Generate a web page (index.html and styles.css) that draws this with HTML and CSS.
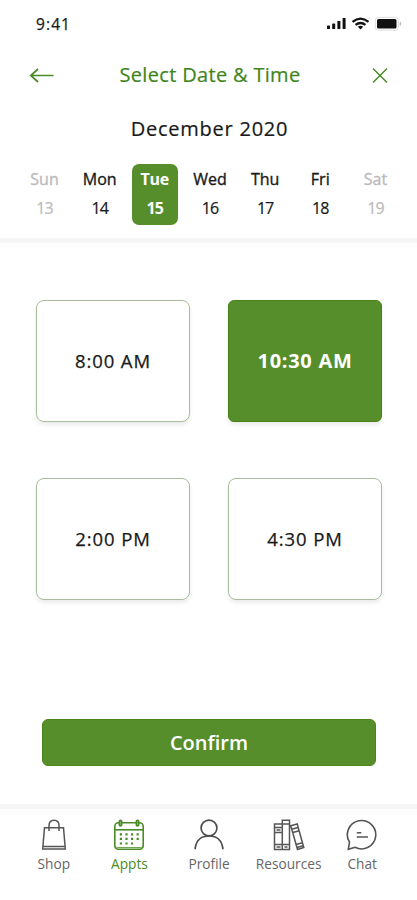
FILE: index.html
```html
<!DOCTYPE html>
<html lang="en">
<head>
<meta charset="utf-8">
<title>Select Date &amp; Time</title>
<link rel="stylesheet" href="styles.css">
</head>
<body>
<div class="screen">
  <div class="status">
    <span class="clock">9:41</span>
    <svg class="status-icons" width="76" height="16" viewBox="0 0 76 16">
      <g fill="#111">
        <rect x="0" y="10.500" width="3" height="3.500" rx=".6"/><rect x="5.200" y="8.500" width="3" height="5.500" rx=".6"/><rect x="10.400" y="6" width="3" height="8" rx=".6"/><rect x="15.600" y="3" width="3" height="11" rx=".6"/>
        <rect x="50" y="4" width="19.500" height="9.500" rx="1.500"/>
      </g>
      <g fill="none" stroke="#111" stroke-width="2.200">
        <path d="M25.500 6.800Q33.500 .3 41.500 6.800"/><path d="M28.500 9.900Q33.500 6.100 38.500 9.900"/>
      </g>
      <path d="M30.800 11.800Q33.500 9.900 36.200 11.800L33.500 14.500Z" fill="#111"/>
      <rect x="48.300" y="2.300" width="22.900" height="12.900" rx="3" fill="none" stroke="#dedede"/>
      <path d="M72.700 6.500v4.500q1.600-.6 1.600-2.250T72.700 6.500" fill="#bbb"/>
    </svg>
  </div>
  <header class="title-bar">
    <svg width="26" height="18" viewBox="0 0 26 18" fill="none" stroke="#4b8b25" stroke-width="1.700"><path d="M24.500 9.500H2M9 3L1.800 9.500L9 16"/></svg>
    <h1>Select Date &amp; Time</h1>
    <svg width="16" height="18" viewBox="0 0 16 18" fill="none" stroke="#4b8b25" stroke-width="1.500"><path d="M1 2.500L15 16.500M15 2.500L1 16.500"/></svg>
  </header>
  <h2 class="month"><span>December 2020</span></h2>
  <div class="week">
    <div class="day off"><b>Sun</b><span>13</span></div>
    <div class="day"><b>Mon</b><span>14</span></div>
    <div class="day on"><b>Tue</b><span>15</span></div>
    <div class="day"><b>Wed</b><span>16</span></div>
    <div class="day"><b>Thu</b><span>17</span></div>
    <div class="day"><b>Fri</b><span>18</span></div>
    <div class="day off"><b>Sat</b><span>19</span></div>
  </div>
  <div class="rule"></div>
  <main class="slots">
    <div class="slot"><span>8:00 AM</span></div>
    <div class="slot on"><span>10:30 AM</span></div>
    <div class="slot"><span>2:00 PM</span></div>
    <div class="slot"><span>4:30 PM</span></div>
  </main>
  <div class="confirm"><span>Confirm</span></div>
  <div class="rule"></div>
  <nav class="tabs">
    <div class="tab shop">
      <svg width="32" height="32" viewBox="0 0 32 32" fill="none" stroke="#555" stroke-width="1.500"><path d="M6.500 8.800H25.500L27.300 30H4.700ZM4.900 27.500H27.100M11 12V6.500Q11 1.200 16 1.200T21 6.500V12"/></svg>
      <span>Shop</span>
    </div>
    <div class="tab appts">
      <svg width="32" height="32" viewBox="0 0 32 32" fill="none" stroke="#4b8b25" stroke-width="1.600"><rect x="1.800" y="3.800" width="28.400" height="26.400" rx="3.500"/><path d="M2 10.800H30"/><path d="M2 27.200Q3 28.500 5 28.500H27Q29 28.500 30 27.200" stroke-width=".8"/><rect x="6.300" y="1.200" width="2.400" height="5.800" rx="1.200" fill="#8fb777"/><rect x="23.300" y="1.200" width="2.400" height="5.800" rx="1.200" fill="#8fb777"/><g stroke-width="2.200" stroke-dasharray="2.200 3.400"><path d="M6.800 15.300H25.800M6.800 19.800H25.800M6.800 24.500H20.500"/></g></svg>
      <span>Appts</span>
    </div>
    <div class="tab profile">
      <svg width="32" height="32" viewBox="0 0 32 32" fill="none" stroke="#4d4d4d" stroke-width="1.700"><circle cx="16" cy="9" r="7.900"/><path d="M2.200 30.300V29Q4 17 16 17T29.800 29V30.300"/></svg>
      <span>Profile</span>
    </div>
    <div class="tab resources">
      <svg width="32" height="32" viewBox="0 0 32 32" fill="none" stroke="#555" stroke-width="1.500"><path d="M1.500 5H9.300V30.500H1.500ZM1.500 8.500H9.300M1.500 13.500H9.300M1.500 25.500H9.300M3.500 11H7.500M3.500 28H7.500M9.300 1.200H16.500V30.500H9.300ZM9.300 5H16.500M9.300 25.500H16.500M11.500 28H14.500M17.800 6.800L24.200 5L30.800 28.500L24.500 30.500ZM18.800 10.300L25.200 8.500M19.800 13.500L26.200 11.700M23 25.500L29.500 23.700M24 28.500L30 26.700"/></svg>
      <span>Resources</span>
    </div>
    <div class="tab chat">
      <svg width="32" height="32" viewBox="0 0 32 32" fill="none" stroke="#555" stroke-width="1.600"><path d="M2.300 30.300L3.500 23.200A14.200 14.200 0 1 1 9 28.300Z"/><path d="M10.800 13.700H15.300M10.800 18H22"/></svg>
      <span>Chat</span>
    </div>
  </nav>
</div>
</body>
</html>
```
FILE: styles.css
```css
* { box-sizing: border-box; }
body { margin: 0; background: #fff; color: #191919; font-family: "Open Sans", "Noto Sans", sans-serif; }
.screen { width: 417px; height: 900px; display: flex; flex-direction: column; overflow: hidden; }
svg { display: block; flex: none; }
h1, h2 { margin: 0; font-size: 20px; font-weight: 500; line-height: 26px; white-space: nowrap; -webkit-text-stroke: .2px currentColor; }

.status { height: 48px; padding: 15px 14px 0 36px; display: flex; justify-content: space-between; align-items: flex-start; }
.clock { font-size: 15.5px; line-height: 18px; letter-spacing: 1.1px; -webkit-text-stroke: .25px currentColor; }

.title-bar { height: 54px; padding: 0 29px; display: flex; align-items: center; justify-content: space-between; }
.title-bar h1 { color: #3f851b; margin-left: -7px; letter-spacing: .33px; }
.month { height: 62px; padding: 14px 0 0 2px; text-align: center; letter-spacing: .75px; }

.week { height: 60px; padding: 0 14px 0 17px; display: grid; grid-template-columns: repeat(7, 55px); justify-content: space-between; }
.day { width: 46px; height: 61px; margin: 0 auto; padding-top: 5px; border-radius: 7px; display: flex; flex-direction: column; align-items: center; font-size: 16px; line-height: 21px; }
.day b { font-weight: 500; -webkit-text-stroke: .35px currentColor; }
.day span { margin-top: 8px; letter-spacing: -.9px; -webkit-text-stroke: .2px currentColor; }
.day.off { color: #bababa; }
.day.on { background: #568e2b; color: #fff; }
.day.on b, .day.on span { font-weight: 700; -webkit-text-stroke: 0; }
.day.on b { letter-spacing: -.2px; }

.rule { height: 20px; margin-top: 14px; background: linear-gradient(#f6f6f6 0 5px, #fdfdfd 5px 7px, #fff 12px); flex: none; }

.slots { height: 386px; padding: 42px 35px 0 36px; display: grid; grid-template-columns: 154px 154px; grid-template-rows: 122px 122px; justify-content: space-between; row-gap: 56px; }
.slot { border: 1px solid #a9bd9c; border-radius: 8px; box-shadow: 0 3px 4px rgba(0, 0, 0, .08); display: flex; align-items: center; justify-content: center; font-size: 18.5px; letter-spacing: .9px; -webkit-text-stroke: .25px currentColor; }
.slot span { margin-top: -2px; }
.slot.on { background: #568e2b; border-color: #478216; border-radius: 6px; color: #fff; font-size: 20px; font-weight: 700; letter-spacing: .7px; -webkit-text-stroke: 0; }

.confirm { width: 334px; height: 47px; margin: 75px 0 0 42px; border-radius: 6px; background: #568e2b; border: 1px solid #4a841b; color: #fff; display: flex; align-items: center; justify-content: center; font-size: 20px; font-weight: 600; }
.confirm + .rule { margin-top: 38px; height: 15px; }

.tabs { padding: 0 30px; display: flex; }
.tab { display: flex; flex-direction: column; align-items: center; color: #666; font-size: 13.7px; line-height: 20px; white-space: nowrap; }
.tab span { margin-top: 3px; }
.tab.appts { color: #4b8b25; }
.shop { width: 48px; }
.appts { width: 62px; margin-left: 21px; }
.profile { width: 60px; margin-left: 19px; }
.resources { width: 70px; margin-left: 15px; }
.chat { width: 50px; margin-left: 14px; }
```
